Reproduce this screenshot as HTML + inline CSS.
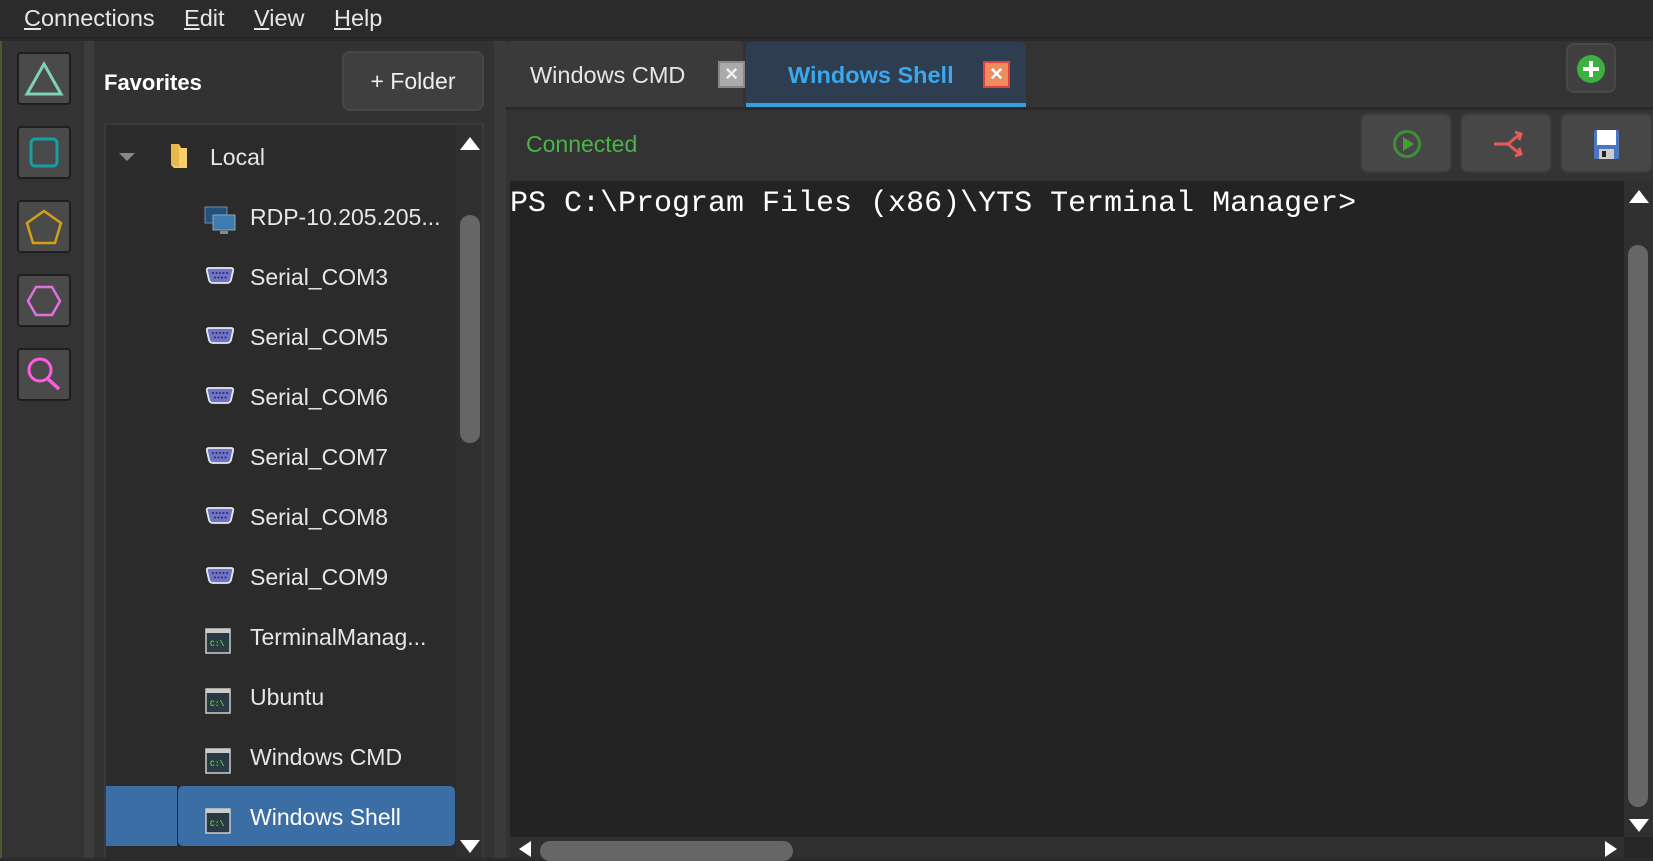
<!DOCTYPE html>
<html><head><meta charset="utf-8"><style>
*{margin:0;padding:0;box-sizing:border-box}
body{width:1653px;height:858px;background:#2b2b2b;position:relative;overflow:hidden;font-family:"Liberation Sans",sans-serif;color:#e8e8e8}
.a{position:absolute}
.menu{left:0;top:0;width:1653px;height:39px;background:#2b2b2b;border-bottom:2px solid #262626}
.menu span{position:absolute;top:5px;font-size:23.5px;color:#e6e6e6}
.menu u{text-decoration:underline}
.lbtn{left:17px;width:54px;height:53px;background:#4a4a4a;border:2px solid #1f1f1f;border-radius:4px}
.row{position:absolute;left:0;width:345px;height:60px;font-size:23px;color:#e6e6e6}
.row .t{position:absolute;left:144px;top:16px;white-space:nowrap}
.row svg{position:absolute;left:98px;top:17px}
.btn{background:#474747;border:2px solid #3c3c3c;border-radius:8px}
</style></head><body>
<div class="a menu">
<span style="left:24px"><u>C</u>onnections</span>
<span style="left:184px"><u>E</u>dit</span>
<span style="left:254px"><u>V</u>iew</span>
<span style="left:334px"><u>H</u>elp</span>
</div>
<!-- left strip -->
<div class="a" style="left:0;top:41px;width:84px;height:817px;background:#333"></div>
<div class="a" style="left:0;top:41px;width:2px;height:817px;background:#4a5a30"></div>
<div class="a" style="left:84px;top:41px;width:10px;height:817px;background:#3c3c3c"></div>
<div class="a lbtn" style="top:52px"><svg width="50" height="49"><polygon points="25,10 42,40 8,40" fill="none" stroke="#7fd1b9" stroke-width="3"/></svg></div>
<div class="a lbtn" style="top:126px"><svg width="50" height="49"><rect x="12" y="11" width="26" height="27" rx="4" fill="none" stroke="#16a0a0" stroke-width="3"/></svg></div>
<div class="a lbtn" style="top:200px"><svg width="50" height="49"><polygon points="25,9 42,21 36,41 14,41 8,21" fill="none" stroke="#d4a017" stroke-width="2.5"/></svg></div>
<div class="a lbtn" style="top:274px"><svg width="50" height="49"><polygon points="17,11 33,11 41,25 33,39 17,39 9,25" fill="none" stroke="#e070e0" stroke-width="2.5"/></svg></div>
<div class="a lbtn" style="top:348px"><svg width="50" height="49"><circle cx="21" cy="20" r="11" fill="none" stroke="#ff5ce0" stroke-width="3"/><line x1="29" y1="29" x2="40" y2="39" stroke="#ff5ce0" stroke-width="3.5"/></svg></div>
<!-- favorites panel -->
<div class="a" style="left:94px;top:41px;width:400px;height:817px;background:#323232"></div>
<div class="a" style="left:104px;top:70px;font-size:22px;font-weight:bold;color:#fff">Favorites</div>
<div class="a btn" style="left:342px;top:51px;width:142px;height:60px;background:#3f3f3f;border-color:#474747;font-size:23px;color:#eee;text-align:center;line-height:56px">+ Folder</div>
<svg width="0" height="0" style="position:absolute"><defs>
<g id="ser"><path d="M3 6Q2 3 5 3h22q3 0 2 3l-2 9q-1 3-4 3H9q-3 0-4-3z" fill="#6f74c8" stroke="#e8e8e8" stroke-width="1.8"/><g fill="#2a2a60"><circle cx="9" cy="8" r="1"/><circle cx="12.5" cy="8" r="1"/><circle cx="16" cy="8" r="1"/><circle cx="19.5" cy="8" r="1"/><circle cx="23" cy="8" r="1"/><circle cx="11" cy="12.5" r="1"/><circle cx="14.5" cy="12.5" r="1"/><circle cx="18" cy="12.5" r="1"/><circle cx="21.5" cy="12.5" r="1"/></g></g>
<g id="cmd"><rect x="2" y="4" width="24" height="24" fill="#2a3a44" stroke="#ccc" stroke-width="1.5"/><rect x="2" y="4" width="24" height="4" fill="#ccc"/><text x="6" y="21" font-size="8" fill="#7f3" font-family="Liberation Mono">C:\</text></g>
</defs></svg>
<div class="a" style="left:104px;top:123px;width:380px;height:735px;background:#2b2b2b;border:2px solid #3a3a3a;border-bottom:none;overflow:hidden">
 <div class="a" style="left:350px;top:0;width:28px;height:735px;background:#303030"></div>
 <svg class="a" style="left:352px;top:10px" width="24" height="18"><polygon points="12,2 22,15 2,15" fill="#fff"/></svg>
 <div class="a" style="left:354px;top:90px;width:20px;height:228px;background:#666;border-radius:10px"></div>
 <svg class="a" style="left:352px;top:712px" width="24" height="18"><polygon points="2,3 22,3 12,16" fill="#fff"/></svg>
 <div class="a" style="left:-6px;top:661px;width:77px;height:60px;background:#3b6ea5"></div>
 <div class="a" style="left:72px;top:661px;width:277px;height:60px;background:#3b6ea5;border-radius:5px"></div>
 <div class="row" style="top:3px"><svg style="left:12px;top:24px" width="18" height="12"><polygon points="1,1 17,1 9,9" fill="#888"/></svg><svg style="left:62px;top:14px" width="22" height="28"><path d="M3 2h8l2 4h6v20H6l-3-3z" fill="#f5cf6a"/><path d="M3 2h8v23l-8-2z" fill="#e8b84a"/></svg><span class="t" style="left:104px">Local</span></div>
 <div class="row" style="top:63px"><svg width="34" height="32"><rect x="1" y="2" width="22" height="16" fill="#24507a" stroke="#6b8cae"/><rect x="9" y="10" width="22" height="15" fill="#3e7bb0" stroke="#8aa"/><rect x="16" y="26" width="8" height="3" fill="#888"/></svg><span class="t">RDP-10.205.205...</span></div>
 <div class="row" style="top:123px"><svg width="34" height="32"><use href="#ser"/></svg><span class="t">Serial_COM3</span></div>
 <div class="row" style="top:183px"><svg width="34" height="32"><use href="#ser"/></svg><span class="t">Serial_COM5</span></div>
 <div class="row" style="top:243px"><svg width="34" height="32"><use href="#ser"/></svg><span class="t">Serial_COM6</span></div>
 <div class="row" style="top:303px"><svg width="34" height="32"><use href="#ser"/></svg><span class="t">Serial_COM7</span></div>
 <div class="row" style="top:363px"><svg width="34" height="32"><use href="#ser"/></svg><span class="t">Serial_COM8</span></div>
 <div class="row" style="top:423px"><svg width="34" height="32"><use href="#ser"/></svg><span class="t">Serial_COM9</span></div>
 <div class="row" style="top:483px"><svg width="34" height="32"><use href="#cmd"/></svg><span class="t">TerminalManag...</span></div>
 <div class="row" style="top:543px"><svg width="34" height="32"><use href="#cmd"/></svg><span class="t">Ubuntu</span></div>
 <div class="row" style="top:603px"><svg width="34" height="32"><use href="#cmd"/></svg><span class="t">Windows CMD</span></div>
 <div class="row" style="top:663px"><svg width="34" height="32"><use href="#cmd"/></svg><span class="t" style="color:#fff">Windows Shell</span></div>
</div>
<div class="a" style="left:494px;top:41px;width:12px;height:817px;background:#3a3a3a"></div>
<!-- right panel -->
<div class="a" style="left:506px;top:41px;width:1147px;height:817px;background:#333"></div>
<div class="a" style="left:506px;top:107px;width:1147px;height:3px;background:#2a2a2a"></div>
<div class="a" style="left:506px;top:41px;width:237px;height:66px;background:#3a3a3a;border-radius:6px 6px 0 0"></div>
<div class="a" style="left:530px;top:62px;font-size:23.5px;color:#e6e6e6">Windows CMD</div>
<div class="a" style="left:718px;top:61px;width:27px;height:27px;background:#aaa;border:2px solid #888;color:#eee;font-size:22px;line-height:22px;text-align:center;font-weight:bold">×</div>
<div class="a" style="left:746px;top:42px;width:280px;height:65px;background:#2e3d4f;border-radius:6px 6px 0 0;border-bottom:4px solid #35a0e0"></div>
<div class="a" style="left:788px;top:62px;font-size:23.5px;font-weight:bold;color:#3aa8ec">Windows Shell</div>
<div class="a" style="left:983px;top:61px;width:27px;height:27px;background:#ef8c5e;border:2px solid #e0403a;color:#fff;font-size:22px;line-height:22px;text-align:center;font-weight:bold">×</div>
<div class="a btn" style="left:1566px;top:43px;width:50px;height:50px;background:#3f3f3f;border-color:#484848"><svg width="46" height="46"><circle cx="23" cy="24" r="14" fill="#3cb043"/><path d="M23 16v16M15 24h16" stroke="#fff" stroke-width="4"/></svg></div>
<div class="a" style="left:526px;top:131px;font-size:23px;color:#4ab34a">Connected</div>
<div class="a btn" style="left:1360px;top:113px;width:92px;height:60px"><svg width="88" height="56"><circle cx="45" cy="29" r="12.5" fill="none" stroke="#3f8f3a" stroke-width="3"/><polygon points="41,22 52,29 41,36" fill="#4a9a3a"/></svg></div>
<div class="a btn" style="left:1460px;top:113px;width:92px;height:60px"><svg width="88" height="56"><path d="M32 29h14M46 29l12-10M46 29l12 10M53 17l6 2-2 6M53 41l6-2-2-6" stroke="#e55a5a" stroke-width="3" fill="none"/></svg></div>
<div class="a btn" style="left:1560px;top:113px;width:93px;height:60px"><svg width="88" height="56"><rect x="32" y="15" width="25" height="29" rx="2" fill="#4a78c0"/><rect x="35" y="15" width="19" height="15" fill="#fff"/><rect x="37" y="34" width="15" height="10" fill="#ccc"/><rect x="40" y="36" width="4" height="6" fill="#222"/></svg></div>
<!-- terminal -->
<div class="a" style="left:510px;top:181px;width:1114px;height:656px;background:#232323"></div>
<div class="a" style="left:510px;top:187px;font-family:'Liberation Mono',monospace;font-size:30px;color:#fff;white-space:pre">PS C:\Program Files (x86)\YTS Terminal Manager&gt;</div>
<div class="a" style="left:1624px;top:181px;width:29px;height:656px;background:#303030"></div>
<svg class="a" style="left:1627px;top:188px" width="24" height="18"><polygon points="12,2 22,15 2,15" fill="#fff"/></svg>
<div class="a" style="left:1628px;top:245px;width:20px;height:562px;background:#666;border-radius:10px"></div>
<svg class="a" style="left:1627px;top:816px" width="24" height="18"><polygon points="2,3 22,3 12,16" fill="#fff"/></svg>
<div class="a" style="left:510px;top:837px;width:1114px;height:21px;background:#303030"></div>
<svg class="a" style="left:516px;top:840px" width="18" height="18"><polygon points="15,1 15,17 3,9" fill="#fff"/></svg>
<div class="a" style="left:540px;top:841px;width:253px;height:20px;background:#666;border-radius:10px"></div>
<svg class="a" style="left:1602px;top:840px" width="18" height="18"><polygon points="3,1 3,17 15,9" fill="#fff"/></svg>
<div class="a" style="left:1624px;top:837px;width:29px;height:21px;background:#262626"></div>
</body></html>
